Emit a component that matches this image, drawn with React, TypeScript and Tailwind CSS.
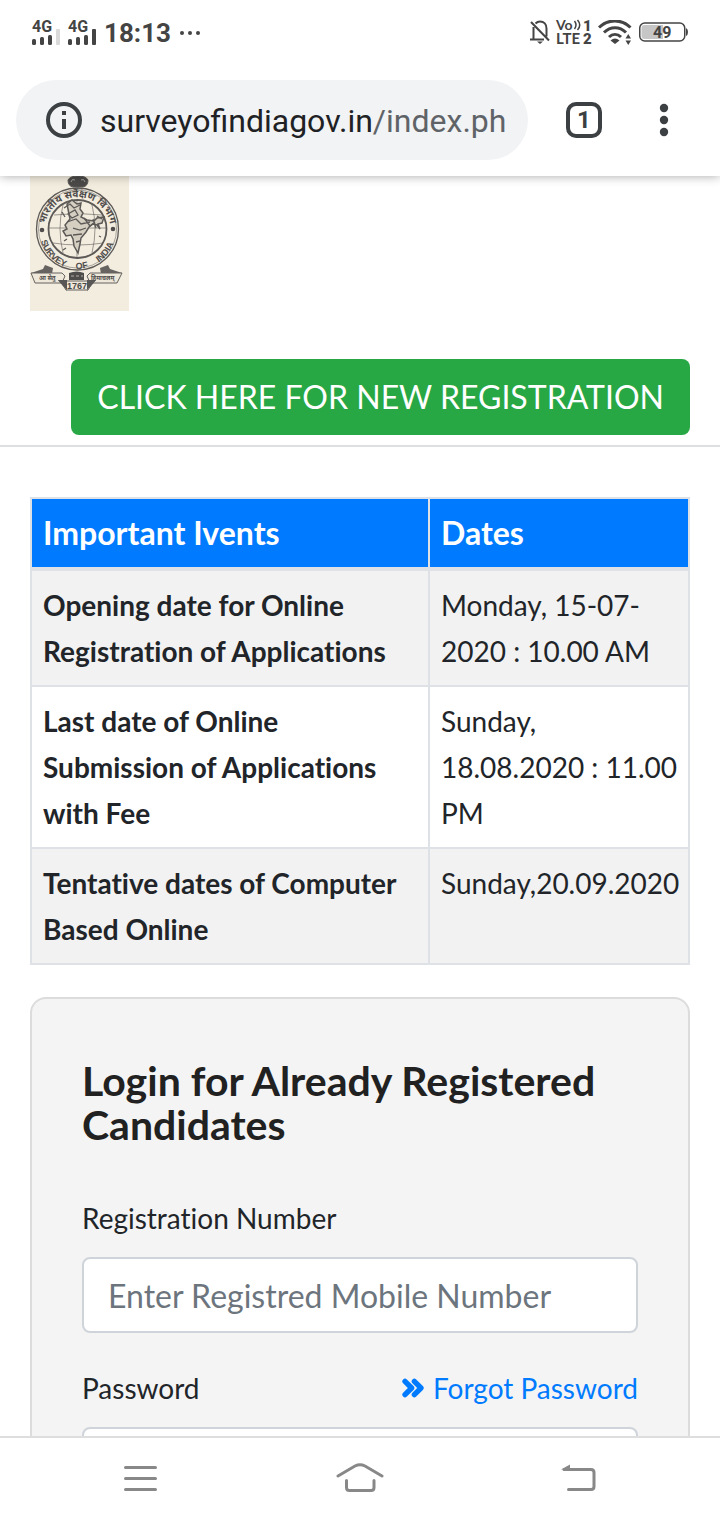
import { ChevronsRight } from "lucide-react";

const events = [
  { name: "Opening date for Online Registration of Applications", date: "Monday, 15-07-2020 : 10.00 AM" },
  { name: "Last date of Online Submission of Applications with Fee", date: "Sunday, 18.08.2020 : 11.00 PM" },
  { name: "Tentative dates of Computer Based Online", date: "Sunday,20.09.2020" },
];

function Signal({ last }: { last: string }) {
  return (
    <svg width="28" height="32" viewBox="0 0 28 32" className="overflow-visible" fill="#444" aria-label="4G signal">
      <text x="0" y="15" fontFamily="Roboto" fontSize="16" fontWeight="700">4G</text>
      <rect x="0" y="22" width="4" height="6" rx="1.5" />
      <rect x="8" y="20" width="4" height="8" rx="1.5" />
      <rect x="16" y="18" width="4" height="10" rx="1.5" />
      <rect x="24" y="12" width="4" height="16" rx="1" fill={last} />
    </svg>
  );
}

function StatusBar() {
  return (
    <div className="flex h-16 shrink-0 items-center justify-between px-8 pt-0.5 font-[Roboto,sans-serif] text-[#444]">
      <div className="flex items-center gap-2">
        <Signal last="#dadada" />
        <Signal last="#444" />
        <span className="text-[26px] leading-8 font-bold">18:13</span>
        <svg width="22" height="6" viewBox="0 0 22 6" fill="#444">
          <circle cx="3" cy="3" r="2" />
          <circle cx="11" cy="3" r="2" />
          <circle cx="19" cy="3" r="2" />
        </svg>
      </div>
      <div className="flex items-center gap-1.5">
        <svg width="20" height="26" viewBox="0 0 20 26" fill="none" stroke="#444" strokeWidth="2">
          <path d="M5.500 3.500C7 2 8.500 1.500 10 1.500c4 0 6.500 3 6.500 7v8M3.500 7v12.500M0 19.500h14M1 2 19 20.500" />
          <path d="M7 21.500h6l-3 2.500z" fill="#444" stroke="none" />
        </svg>
        <svg width="36" height="32" viewBox="0 0 36 32" className="overflow-visible" fill="#444" aria-label="VoLTE 2">
          <text x="0" y="13" fontFamily="Lato" fontSize="14" fontWeight="700">Vo</text>
          <path d="M18.500 4q3 4 0 8M21.500 3q4.500 5 0 10" fill="none" stroke="#444" strokeWidth="1.500" />
          <text x="27" y="14" fontFamily="Roboto" fontSize="15" fontWeight="900">1</text>
          <text x="0" y="27" fontFamily="Lato" fontSize="15" fontWeight="700">LTE</text>
          <text x="27" y="27" fontFamily="Roboto" fontSize="15" fontWeight="900">2</text>
        </svg>
        <svg width="34" height="26" viewBox="0 0 34 26" fill="none" stroke="#444">
          <path d="M1 7.500C10-1.300 23.500-1.300 32.500 7.500" strokeWidth="3" />
          <path d="M6 12.500c6.500-6.300 15.500-6.300 22 0" strokeWidth="3" />
          <path d="M11 17c3.600-3.500 8.400-3.500 12 0" strokeWidth="3" />
          <path d="M12.500 20.500q4.500-4 9 0L17 24z" fill="#444" stroke="none" />
          <path d="M27.500 18.500h5.500l-2.750-4.500zM27.500 20.500h5.500l-2.750 4.500z" fill="#444" stroke="none" />
        </svg>
        <svg width="50" height="22" viewBox="0 0 50 22" aria-label="Battery 49">
          <rect x="1.750" y="1" width="45" height="18" rx="5" fill="none" stroke="#444" strokeWidth="1.500" />
          <path d="M6.500 3H25v14H6.500q-3 0-3-3V6q0-3 3-3z" fill="#c6c6c6" />
          <path d="M48 6q2 1 2 4t-2 4z" fill="#444" />
          <text x="15" y="15.500" fontFamily="Roboto" fontSize="16" fontWeight="700" fill="#444">49</text>
        </svg>
      </div>
    </div>
  );
}

function AddressBar() {
  return (
    <div className="flex shrink-0 items-center p-4 font-[Roboto,sans-serif]">
      <div className="flex h-20 min-w-0 flex-1 items-center gap-[18px] rounded-full bg-[#f1f3f4] pr-4 pl-[30px]">
        <svg width="36" height="36" viewBox="0 0 36 36" className="shrink-0" fill="none" stroke="#3c4043" strokeWidth="4">
          <circle cx="18" cy="18" r="16" />
          <path d="M18 9v4M18 17v10" />
        </svg>
        <div className="flex-1 overflow-hidden pt-0.5 text-[32px] leading-11 whitespace-nowrap text-[#202124]">
          surveyofindiagov.in<span className="text-[#5f6368]">/index.ph</span>
        </div>
      </div>
      <button className="ml-[38px] flex size-9 items-center justify-center rounded-[10px] border-4 border-[#3c4043] text-[24px] leading-6 font-bold text-[#3c4043]">
        1
      </button>
      <button aria-label="More options" className="mr-[34px] ml-14">
        <svg width="12" height="36" viewBox="0 0 12 36" fill="#3c4043">
          <circle cx="6" cy="6" r="4.200" />
          <circle cx="6" cy="18" r="4.200" />
          <circle cx="6" cy="30" r="4.200" />
        </svg>
      </button>
    </div>
  );
}

function Emblem() {
  return (
    <svg width="99" height="135" viewBox="0 0 99 135" aria-label="Survey of India 1767">
      <defs>
        <path id="arcTop" d="M15 60A33 33 0 1 1 80 60" />
        <path id="arcBottom" d="M9.500 55A38 38 0 0 0 85.500 55" />
      </defs>
      <rect width="99" height="135" fill="#f3eddf" />
      <g fill="none" stroke="#5c5957">
        <path d="M38 4q2-4 10-4t10 4q0 6-5 7H43q-5-1-5-7z" fill="#4b4a49" />
        <path d="M41 6q1-4 4-2M55 6q-1-4-4-2M44 12v2h8v-2" stroke="#a59f96" />
        <circle cx="47.500" cy="53" r="41" strokeWidth="1.300" />
        <circle cx="47.500" cy="53" r="39" strokeWidth=".5" />
        <circle cx="47.500" cy="53" r="29" strokeWidth="1.800" />
        <path d="M33 29q-6 23 0 48M47 25v58M62 29q6 23 0 48M19 52h58M24 39q24-3 48 0M23 67q25 4 50 0" strokeWidth=".6" />
        <path d="M37 28l5-4 5 4 4-1-1 6 3 4-2 4 6 3 7 1 3-3 7-1-2 6-4 1 2 5-3-4-4-1-4 3-3 5-5 6-1 6-2 9-4-7-1-7-2-4-5 1-3-5 4-2-2-4 5-6-1-5z" fill="#d5cfc2" strokeWidth="1.500" />
        <path d="M34 32l6-4 4 4 6-3M38 38l7-4 3 5-6 3zM37 46l9-3 5 5 9-2M43 52l7 2 6-2M43 59l9-1M46 66l4-1M54 42l6 8 5-4M63 43l3 9M67 40l5 3M32 36l3 5M34 65l3-2M33 74l3-2M69 60l2 1" strokeWidth="1.300" />
      </g>
      <g fill="#4f4c4b" fontWeight="700">
        <text fontSize="10" fontFamily="Noto Sans, sans-serif"><textPath href="#arcTop" startOffset="50%" textAnchor="middle">भारतीय सर्वेक्षण विभाग</textPath></text>
        <g fontSize="9" fontFamily="Liberation Sans">
          <text><textPath href="#arcBottom" startOffset="10">SURVEY</textPath></text>
          <text><textPath href="#arcBottom" startOffset="58">OF</textPath></text>
          <text><textPath href="#arcBottom" startOffset="82">INDIA</textPath></text>
        </g>
        <circle cx="12" cy="54" r="2.300" />
        <circle cx="83" cy="53" r="2.300" />
      </g>
      <path d="M1 97l12-4 2-4 8 3-1 6-18 1zM92 97l-12-4-2-4-8 3 1 6 18 1z" fill="#666361" />
      <path d="M1 97h31l3 3-3 7H5zM92 97H60l-3 3 3 7h27z" fill="#eee8da" stroke="#66625f" />
      <path d="M28 104h9v11zM66 104h-9v11z" fill="#595756" />
      <path d="M31 105h32l-5 9H36z" fill="#eee8da" stroke="#66625f" />
      <path d="M28 104h9v10zM66 104h-9v10z" fill="#595756" />
      <path d="M39 97q8-3 15 0v7H39z" fill="#4f4d4b" />
      <path d="M41 100h3M46 100h3M51 100h2" stroke="#b5afa5" />
      <g fill="#4c4a49" fontFamily="Noto Sans, sans-serif" fontWeight="700" fontSize="6">
        <text x="9" y="104">आ सेतु</text>
        <text x="61" y="104">हिमाचलम्</text>
        <text x="37" y="113" fontFamily="Liberation Sans" fontSize="9">1767</text>
      </g>
    </svg>
  );
}

export default function App() {
  return (
    <div className="flex h-screen flex-col overflow-hidden bg-white font-[Lato,sans-serif] text-[#212529] [font-variant-ligatures:no-common-ligatures]">
      <header className="relative z-10 shrink-0 bg-white shadow-[0_0_10px_rgba(0,0,0,0.35)] [font-variant-ligatures:normal]">
        <StatusBar />
        <AddressBar />
      </header>

      <main className="min-h-0 flex-1 overflow-hidden">
        <div className="flex flex-col border-b-2 border-[#dedfe1] px-[30px] pb-2.5">
          <Emblem />
          <button className="mt-12 self-end rounded-lg bg-[#28a745] px-[26px] py-[13px] text-[32px] leading-[50px] whitespace-nowrap text-white">
            CLICK HERE FOR NEW REGISTRATION
          </button>
        </div>

        <div className="px-[30px] pt-[50px]">
          <table className="w-full border-collapse text-left text-[28px] leading-[46px]">
            <thead>
              <tr className="bg-[#007bff] text-[32px] text-white">
                <th className="w-[398px] border-2 border-b-4 border-[#dee2e6] py-[11px] pr-2 pl-[11px] font-bold">Important Ivents</th>
                <th className="border-2 border-b-4 border-[#dee2e6] py-[11px] pr-2 pl-[11px] font-bold">Dates</th>
              </tr>
            </thead>
            <tbody>
              {events.map((event) => (
                <tr key={event.name} className="align-top odd:bg-[#f2f2f2]">
                  <th className="border-2 border-[#dee2e6] py-[11px] pr-2 pl-[11px] font-bold">{event.name}</th>
                  <td className="border-2 border-[#dee2e6] py-[11px] pr-2 pl-[11px]">{event.date}</td>
                </tr>
              ))}
            </tbody>
          </table>

          <form className="mt-8 rounded-2xl border-2 border-[#dcdcdc] bg-[#f4f4f4] px-[50px] pt-[60px] pb-12 text-[28px] leading-[46px]">
            <h2 className="text-[41px] leading-11 font-bold text-[#212121]">Login for Already Registered Candidates</h2>
            <label htmlFor="mobile" className="mt-12 block">Registration Number</label>
            <input
              id="mobile"
              placeholder="Enter Registred Mobile Number"
              className="mt-4 block h-[76px] w-full rounded-lg border-2 border-[#ced4da] bg-white px-6 text-[32px] placeholder:text-[#6c757d]"
            />
            <div className="mt-8 flex items-center justify-between">
              <label htmlFor="password">Password</label>
              <a href="#forgot" className="flex items-center gap-1 text-[#007bff]">
                <ChevronsRight size={32} strokeWidth={4} />
                Forgot Password
              </a>
            </div>
            <input
              id="password"
              type="password"
              className="mt-4 block h-[76px] w-full rounded-lg border-2 border-[#ced4da] bg-white px-6 text-[32px]"
            />
          </form>
        </div>
      </main>

      <nav className="flex h-[84px] shrink-0 items-center justify-between border-t-2 border-[#dedede] bg-white px-[122px]">
        <button aria-label="Recent apps">
          <svg width="37" height="32" viewBox="0 0 37 32" fill="none" stroke="#888" strokeWidth="3" strokeLinecap="round">
            <path d="M3.500 4.500h30M3.500 15.500h30M3.500 26.500h30" />
          </svg>
        </button>
        <button aria-label="Home">
          <svg width="50" height="32" viewBox="0 0 50 32" fill="none" stroke="#888" strokeWidth="3" strokeLinecap="round">
            <path d="M3 13l17-10q5-2.500 10 0l17 10M11.500 17.500v7q0 3 3 3h21.500q3 0 3-3v-7" />
          </svg>
        </button>
        <button aria-label="Back">
          <svg width="38" height="32" viewBox="0 0 38 32" fill="none" stroke="#888" strokeWidth="3" strokeLinecap="round">
            <path d="M4 6.500h27q3 0 3 3v14q0 3-3 3H8.500" />
            <path d="M1 6.500 10 1.500v5z" fill="#888" stroke="none" />
          </svg>
        </button>
      </nav>
    </div>
  );
}
